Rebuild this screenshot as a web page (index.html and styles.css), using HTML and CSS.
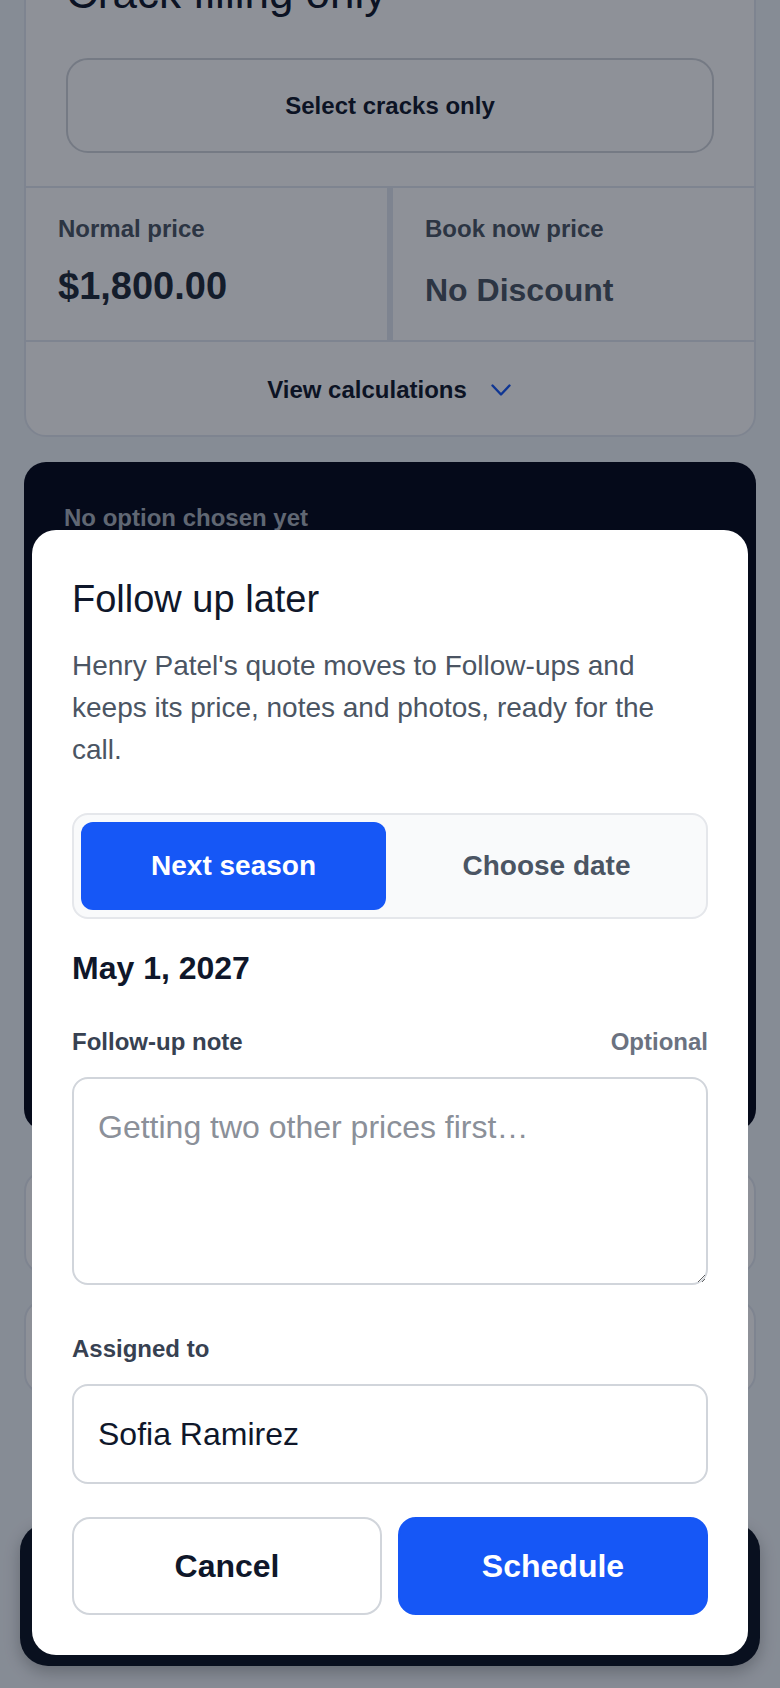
FILE: index.html
```html
<!doctype html>
<html lang="en">
	<head>
		<meta charset="UTF-8" />
		<meta name="viewport" content="width=device-width, initial-scale=1.0" />
		<title>Follow up later</title>
		<link rel="stylesheet" href="styles.css">
	</head>
	<body>
		<div class="page">
			<div class="card option-card">
				<div class="option-head">
					<h2 class="option-title">Crack filling only</h2>
					<button class="select-button">Select cracks only</button>
				</div>
				<div class="price-grid">
					<div class="price-cell">
						<span class="price-label">Normal price</span>
						<span class="price-value">$1,800.00</span>
					</div>
					<div class="price-cell">
						<span class="price-label">Book now price</span>
						<span class="price-value muted">No Discount</span>
					</div>
				</div>
				<div class="calc-row">
					<span>View calculations</span>
					<svg class="chevron" width="24" height="24" viewBox="0 0 24 24" fill="none">
						<path d="M3.5 7.5 L12 16.5 L20.5 7.5" stroke="#1657f6" stroke-width="2.4" stroke-linecap="round" stroke-linejoin="round" />
					</svg>
				</div>
			</div>

			<div class="summary-panel">
				<p class="summary-empty">No option chosen yet</p>
			</div>

			<div class="card small-card"></div>
			<div class="card small-card second"></div>
		</div>

		<!-- 底部操作栏 -->
		<div class="bottom-bar"></div>

		<div class="overlay"></div>

		<div class="sheet">
			<h2 class="sheet-title">Follow up later</h2>
			<p class="sheet-text">Henry Patel's quote moves to Follow-ups and keeps its price, notes and photos, ready for the call.</p>

			<div class="segment">
				<button class="segment-item active">Next season</button>
				<button class="segment-item">Choose date</button>
			</div>

			<div class="chosen-date">May 1, 2027</div>

			<div class="field-label first">
				<label for="note">Follow-up note</label>
				<span class="optional">Optional</span>
			</div>
			<textarea id="note" class="note-input" placeholder="Getting two other prices first…"></textarea>

			<div class="field-label">
				<label for="assignee">Assigned to</label>
			</div>
			<input type="text" id="assignee" class="text-input" value="Sofia Ramirez" />

			<div class="actions">
				<button class="btn btn-cancel">Cancel</button>
				<button class="btn btn-primary">Schedule</button>
			</div>
		</div>
	</body>
</html>
```

FILE: styles.css
```css
:root {
	--primary-color: #1657f6;
	--page-bg: #f1f5f9;
	--card-bg: #ffffff;
	--border-color: #e2e8f0;
	--input-border: #d1d5db;
	--text-color: #0f172a;
	--text-secondary: #4b5563;
	--text-label: #374151;
	--text-tertiary: #6b7280;
	--dark-panel: #020617;
}

* {
	box-sizing: border-box;
}

body {
	margin: 0;
	font-family: 'Liberation Sans', Arial, Helvetica, sans-serif;
	background-color: var(--page-bg);
	color: var(--text-color);
	overflow: hidden;
}

button,
input,
textarea {
	font-family: inherit;
}

.page {
	padding: 0 24px;
	margin-top: -76px;
}

.card {
	background-color: var(--card-bg);
	border: 2px solid var(--border-color);
	border-radius: 22px;
}

/* 选项卡片 */
.option-head {
	padding: 42px 40px 33px;
}

.option-title {
	margin: 0;
	font-size: 44px;
	font-weight: 500;
	line-height: 50px;
}

.select-button {
	display: block;
	width: 100%;
	height: 95px;
	margin-top: 40px;
	background: transparent;
	border: 2px solid var(--input-border);
	border-radius: 22px;
	font-size: 24px;
	font-weight: 700;
	color: var(--text-color);
}

.price-grid {
	display: grid;
	grid-template-columns: 1fr 1fr;
	gap: 6px;
	background-color: var(--border-color);
	border-top: 2px solid var(--border-color);
	border-bottom: 2px solid var(--border-color);
}

.price-cell {
	display: flex;
	flex-direction: column;
	justify-content: space-between;
	gap: 20px;
	padding: 27px 32px 31px;
	background-color: var(--card-bg);
}

.price-label {
	font-size: 24px;
	font-weight: 700;
	line-height: 1.2;
	color: var(--text-secondary);
}

.price-value {
	font-size: 38px;
	font-weight: 700;
	line-height: 1.2;
	color: #1f2937;
}

.price-value.muted {
	font-size: 32px;
	color: var(--text-secondary);
}

.calc-row {
	height: 93px;
	padding-top: 2px;
	display: flex;
	align-items: center;
	justify-content: center;
	gap: 22px;
	font-size: 24px;
	font-weight: 700;
}

.chevron {
	display: block;
}

/* 深色汇总面板 */
.summary-panel {
	height: 669px;
	margin-top: 25px;
	padding: 42px 40px;
	background-color: var(--dark-panel);
	border-radius: 22px;
}

.summary-empty {
	margin: 0;
	font-size: 24px;
	font-weight: 700;
	line-height: 1.2;
	color: #aab1bb;
}

.small-card {
	height: 103px;
	margin-top: 40px;
	border-radius: 20px;
}

.small-card.second {
	height: 94px;
	margin-top: 26px;
}

.bottom-bar {
	position: fixed;
	left: 20px;
	right: 20px;
	bottom: 22px;
	height: 143px;
	background-color: #0b1220;
	border-radius: 28px;
	box-shadow: 0 6px 16px rgba(0, 0, 0, 0.25);
}

.overlay {
	position: fixed;
	inset: 0;
	background-color: rgba(8, 15, 30, 0.46);
}

/* 弹出层 */
.sheet {
	position: fixed;
	left: 32px;
	right: 32px;
	bottom: 33px;
	padding: 47px 40px 40px;
	background-color: #ffffff;
	border-radius: 24px;
}

.sheet-title {
	margin: 0;
	font-size: 38px;
	font-weight: 400;
	line-height: 1.2;
	color: var(--text-color);
}

.sheet-text {
	margin: 22px 0 0;
	font-size: 28px;
	line-height: 42px;
	color: var(--text-secondary);
}

.segment {
	display: grid;
	grid-template-columns: 1fr 1fr;
	gap: 8px;
	margin-top: 42px;
	padding: 7px;
	background-color: #f9fafb;
	border: 2px solid #e5e7eb;
	border-radius: 16px;
}

.segment-item {
	height: 88px;
	border: none;
	border-radius: 12px;
	background: transparent;
	font-size: 28px;
	font-weight: 700;
	color: var(--text-secondary);
}

.segment-item.active {
	background-color: var(--primary-color);
	color: #ffffff;
}

.chosen-date {
	margin-top: 30px;
	font-size: 32px;
	font-weight: 700;
	line-height: 1.2;
	color: var(--text-color);
}

.field-label {
	display: flex;
	justify-content: space-between;
	margin-top: 50px;
	font-size: 24px;
	font-weight: 700;
	line-height: 1.2;
	color: var(--text-label);
}

.field-label.first {
	margin-top: 41px;
}

.optional {
	color: var(--text-tertiary);
}

.note-input,
.text-input {
	display: block;
	width: 100%;
	margin-top: 20px;
	border: 2px solid var(--input-border);
	border-radius: 16px;
	font-size: 32px;
	color: var(--text-color);
	background-color: #ffffff;
	outline: none;
}

.note-input {
	height: 208px;
	padding: 24px;
	line-height: 1.5;
}

.note-input::placeholder {
	color: #8b9099;
	opacity: 1;
}

.text-input {
	height: 100px;
	padding: 0 24px;
}

.actions {
	display: grid;
	grid-template-columns: 1fr 1fr;
	gap: 16px;
	margin-top: 33px;
}

.btn {
	height: 98px;
	border-radius: 18px;
	font-size: 32px;
	font-weight: 700;
}

.btn-cancel {
	background-color: #ffffff;
	border: 2px solid var(--input-border);
	color: var(--text-color);
}

.btn-primary {
	background-color: var(--primary-color);
	border: 2px solid var(--primary-color);
	color: #ffffff;
}
```
